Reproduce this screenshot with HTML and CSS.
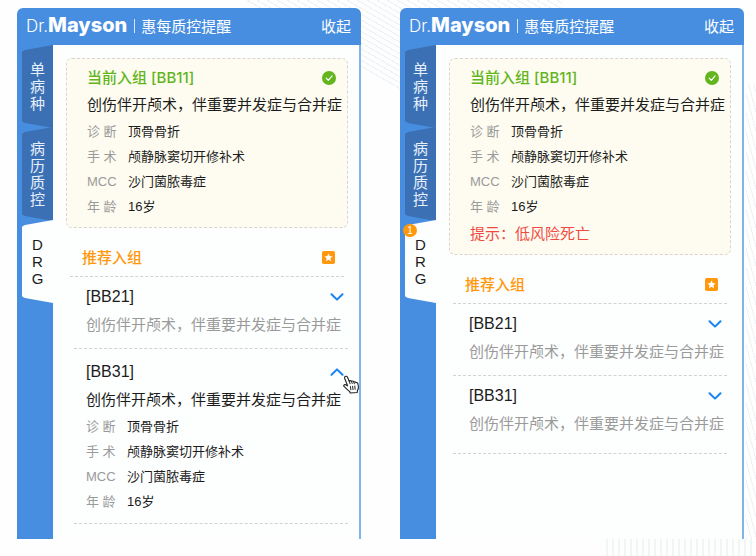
FILE: index.html
```html
<!DOCTYPE html>
<html lang="zh-CN">
<head>
    <meta charset="UTF-8">
    <meta name="viewport" content="width=device-width, initial-scale=1.0">
    <title>惠每质控提醒</title>
    <link rel="stylesheet" href="styles.css">
</head>
<body>
    <!-- 图标 -->
    <svg class="sprite" aria-hidden="true">
        <symbol id="icon-check" viewBox="0 0 14 14">
            <circle cx="7" cy="7" r="7" fill="#62b51c"/>
            <path d="M4.2 7.2l2.1 2.1 3.8-4.4" fill="none" stroke="#fff" stroke-width="1.2" stroke-linecap="round" stroke-linejoin="round"/>
        </symbol>
        <symbol id="icon-star" viewBox="0 0 13 13">
            <rect width="13" height="13" rx="1.8" fill="#ff980c"/>
            <path d="M6.5 2.4l1.2 2.7 2.9.3-2.2 1.9.7 2.9-2.6-1.5-2.6 1.5.7-2.9-2.2-1.9 2.9-.3z" fill="#fff"/>
        </symbol>
        <symbol id="icon-arrow" viewBox="0 0 14 8">
            <path d="M1.5 1.3L7 6.6l5.5-5.3" fill="none" stroke="#1683f5" stroke-width="2" stroke-linecap="round" stroke-linejoin="round"/>
        </symbol>
    </svg>

    <!-- 背景条纹 -->
    <div class="stripes stripes-top"></div>
    <div class="stripes stripes-right"></div>
    <div class="stripes stripes-bottom"></div>

    <main class="container">
        <section class="panel">
            <header class="panel-header">
                <h1 class="logo"><span class="logo-dr">Dr.</span><span class="logo-name">Mayson</span></h1>
                <span class="subtitle">惠每质控提醒</span>
                <button class="fold-btn" type="button">收起</button>
            </header>
            <div class="panel-body">
                <nav class="tabs">
                    <button class="tab" type="button"><span class="tab-shape">单病种</span></button>
                    <button class="tab tab-long" type="button"><span class="tab-shape">病历质控</span></button>
                    <button class="tab active" type="button"><span class="tab-shape">DRG</span></button>
                </nav>
                <div class="content">
                    <div class="card">
                        <h2 class="card-title">当前入组 [BB11]<svg width="14" height="14"><use href="#icon-check"/></svg></h2>
                        <p class="desc">创伤伴开颅术，伴重要并发症与合并症</p>
                        <dl class="info">
                            <dt>诊 断</dt><dd>顶骨骨折</dd>
                            <dt>手 术</dt><dd>颅静脉窦切开修补术</dd>
                            <dt>MCC</dt><dd>沙门菌脓毒症</dd>
                            <dt>年 龄</dt><dd>16岁</dd>
                        </dl>
                    </div>
                    <h2 class="recommend">推荐入组<svg width="13" height="13"><use href="#icon-star"/></svg></h2>
                    <ul class="group-list shifted">
                        <li class="group">
                            <div class="group-title">[BB21]
                                <button class="arrow-btn" type="button" aria-label="展开"><svg width="14" height="8"><use href="#icon-arrow"/></svg></button>
                            </div>
                            <p class="desc">创伤伴开颅术，伴重要并发症与合并症</p>
                        </li>
                        <li class="group open">
                            <div class="group-title">[BB31]
                                <button class="arrow-btn" type="button" aria-label="收起"><svg width="14" height="8"><use href="#icon-arrow"/></svg></button>
                                <svg class="hand" viewBox="0 0 16 19" width="16" height="19">
                                    <path d="M2.2 1.5c.9-.6 1.900-.1 2.300.8l1.700 4c.5-.9 1.800-.9 2.300.2.7-.8 1.900-.6 2.300.5.8-.6 1.800-.3 2.200.7.900-.4 1.700.1 1.900 1l.5 3.300c.2 1.600-.4 2.600-1 3.600l-.1 1.900-7.100.5-.5-1.500c-1.600-1-3.300-3-5.400-4.800-1.300-1.200-.1-2.500 1.400-1.900l1.900 1L1.600 3.200c-.2-.7 0-1.300.6-1.700z" fill="#fff" stroke="#222" stroke-width="1.1" stroke-linejoin="round"/>
                                    <path d="M6.200 6.300l.9 2.500M8.500 6.500l.7 2M10.800 7l.5 1.800M7.400 11.500l.5 3.300M9.600 11.300l.4 3.300M11.800 11l.3 3.300" fill="none" stroke="#222" stroke-linecap="round"/>
                                </svg>
                            </div>
                            <p class="desc">创伤伴开颅术，伴重要并发症与合并症</p>
                            <dl class="info">
                                <dt>诊 断</dt><dd>顶骨骨折</dd>
                                <dt>手 术</dt><dd>颅静脉窦切开修补术</dd>
                                <dt>MCC</dt><dd>沙门菌脓毒症</dd>
                                <dt>年 龄</dt><dd>16岁</dd>
                            </dl>
                        </li>
                    </ul>
                </div>
            </div>
        </section>

        <section class="panel">
            <header class="panel-header">
                <h1 class="logo"><span class="logo-dr">Dr.</span><span class="logo-name">Mayson</span></h1>
                <span class="subtitle">惠每质控提醒</span>
                <button class="fold-btn" type="button">收起</button>
            </header>
            <div class="panel-body">
                <nav class="tabs">
                    <button class="tab" type="button"><span class="tab-shape">单病种</span></button>
                    <button class="tab tab-long" type="button"><span class="tab-shape">病历质控</span></button>
                    <button class="tab active" type="button"><span class="tab-shape">DRG</span><span class="badge">1</span></button>
                </nav>
                <div class="content">
                    <div class="card">
                        <h2 class="card-title">当前入组 [BB11]<svg width="14" height="14"><use href="#icon-check"/></svg></h2>
                        <p class="desc">创伤伴开颅术，伴重要并发症与合并症</p>
                        <dl class="info">
                            <dt>诊 断</dt><dd>顶骨骨折</dd>
                            <dt>手 术</dt><dd>颅静脉窦切开修补术</dd>
                            <dt>MCC</dt><dd>沙门菌脓毒症</dd>
                            <dt>年 龄</dt><dd>16岁</dd>
                        </dl>
                        <p class="warning">提示：低风险死亡</p>
                    </div>
                    <h2 class="recommend">推荐入组<svg width="13" height="13"><use href="#icon-star"/></svg></h2>
                    <ul class="group-list">
                        <li class="group">
                            <div class="group-title">[BB21]
                                <button class="arrow-btn" type="button" aria-label="展开"><svg width="14" height="8"><use href="#icon-arrow"/></svg></button>
                            </div>
                            <p class="desc">创伤伴开颅术，伴重要并发症与合并症</p>
                        </li>
                        <li class="group last">
                            <div class="group-title">[BB31]
                                <button class="arrow-btn" type="button" aria-label="展开"><svg width="14" height="8"><use href="#icon-arrow"/></svg></button>
                            </div>
                            <p class="desc">创伤伴开颅术，伴重要并发症与合并症</p>
                        </li>
                    </ul>
                </div>
            </div>
        </section>
    </main>
</body>
</html>
```
FILE: styles.css
```css
* {
    box-sizing: border-box;
}
body {
    position: relative;
    min-height: 100vh;
    margin: 0;
    background-color: #fefefe;
    font-family: "Liberation Sans", "Noto Sans CJK SC", sans-serif;
    font-size: 15px;
    color: #1c1c1c;
}
h1, h2, p, ul, dl, dd {
    margin: 0;
    padding: 0;
}
button {
    padding: 0;
    border: none;
    background: none;
    font-family: inherit;
    color: inherit;
    cursor: pointer;
}
.sprite {
    position: absolute;
    width: 0;
    height: 0;
}

/* 背景条纹 */
.stripes {
    position: absolute;
}
.stripes-top {
    top: 0;
    left: 32%;
    width: 48%;
    height: 96px;
    background: repeating-linear-gradient(30deg, #eaf2f5 0 1px, transparent 1px 5px);
    clip-path: polygon(0 0, 88% 0, 100% 100%, 45% 100%, 32% 68%);
}
.stripes-right {
    top: 84px;
    right: 0;
    bottom: 16px;
    width: 10px;
    background: repeating-linear-gradient(75deg, #edf3f5 0 1px, transparent 1px 5px);
}
.stripes-bottom {
    right: 0;
    bottom: 0;
    width: 150px;
    height: 17px;
    background: repeating-linear-gradient(90deg, #f0f5f5 0 2px, transparent 2px 6px);
}

.container {
    position: relative;
    display: grid;
    grid-template-columns: 1fr 1fr;
    gap: 39px;
    min-height: 100vh;
    padding: 8px 12px 17px 17px;
}
.panel {
    display: flex;
    flex-direction: column;
    min-width: 0;
    background-color: #fdfefe;
    border-radius: 6px 6px 0 0;
}
.panel-header {
    display: flex;
    align-items: center;
    height: 37px;
    padding: 0 10px 2px 9px;
    background-color: #478ee0;
    border-radius: 6px 6px 0 0;
    color: #fff;
    white-space: nowrap;
}
.logo {
    font-family: Inter, sans-serif;
    font-size: 20px;
    line-height: 32px;
}
.logo-dr {
    font-size: 17px;
    font-weight: 300;
}
.logo-name {
    font-weight: 800;
}
.subtitle {
    display: flex;
    align-items: center;
    margin-right: auto;
}
.subtitle::before {
    content: "";
    width: 1px;
    height: 14px;
    margin: 0 6px 0 7px;
    background-color: #d5e6f9;
}
.fold-btn {
    font-size: 15px;
}
.panel-body {
    display: flex;
    flex: 1;
    border-right: 2px solid #7fb5ea;
}

/* 左侧标签 */
.tabs {
    flex: none;
    width: 36px;
    padding-left: 5px;
    background-color: #478ee0;
}
.tab {
    position: relative;
    display: block;
    width: 100%;
    margin-bottom: -1px;
    font-size: 15px;
    line-height: 17px;
    color: #e6f0fb;
}
.tab-shape {
    display: block;
    padding: 16px 8px;
    background-color: #3c70b4;
    clip-path: polygon(0 7px, 1px 6px, 3px 5px, 100% 0, 100% 100%, 3px calc(100% - 5px), 1px calc(100% - 6px), 0 calc(100% - 7px));
    word-break: break-all;
}
.tab-long .tab-shape {
    padding: 13px 8px;
}
.active {
    color: #1c1c1c;
}
.active .tab-shape {
    background-color: #fdfefe;
}
.badge {
    position: absolute;
    top: 4px;
    left: -2px;
    width: 14px;
    height: 13px;
    border-radius: 7px;
    background-color: #ff980c;
    font-size: 10px;
    line-height: 13px;
    color: #fff;
}

.content {
    flex: 1;
    min-width: 0;
    padding: 13px 11px 0 13px;
}
.card {
    padding: 5px 5px 8px 20px;
    border: 1px dashed #d9d5cc;
    border-radius: 6px;
    background-color: #fefcf0;
}
.card-title {
    display: flex;
    align-items: center;
    justify-content: space-between;
    height: 27px;
    padding-right: 6px;
    font-family: Inter, "Noto Sans CJK SC", sans-serif;
    font-size: 15px;
    font-weight: 500;
    line-height: 22px;
    color: #62b51c;
}
.desc {
    line-height: 28px;
    white-space: nowrap;
}
.info {
    display: grid;
    grid-template-columns: 41px 1fr;
    font-size: 13px;
    line-height: 25px;
}
.info dt {
    color: #9a9a9a;
}
.warning {
    margin-bottom: -2px;
    line-height: 29px;
    color: #f04a42;
}

/* 推荐入组 */
.recommend {
    display: flex;
    align-items: center;
    justify-content: space-between;
    height: 37px;
    margin: 12px 4px 0;
    padding: 0 9px 1px 12px;
    border-bottom: 1px dashed #d2d2d2;
    font-size: 15px;
    font-weight: 500;
    line-height: 22px;
    color: #ff980c;
}
.group-list {
    margin: 0 4px;
    list-style: none;
}
.group {
    padding: 6px 5px 9px 16px;
    border-bottom: 1px dashed #d2d2d2;
}
.group .desc {
    color: #9a9a9a;
}
.group.open {
    padding-top: 9px;
}
.group.open .desc {
    color: #1c1c1c;
}
.group.last {
    padding-bottom: 15px;
}
.shifted {
    margin: 0 0 0 8px;
}
.shifted .group {
    padding-right: 4px;
    padding-left: 12px;
}
.group-title {
    position: relative;
    display: flex;
    align-items: center;
    justify-content: space-between;
    height: 28px;
    font-size: 16px;
}
.arrow-btn {
    display: flex;
}
.open .arrow-btn {
    transform: rotate(180deg);
}
.hand {
    position: absolute;
    top: 17px;
    right: -15px;
}
```
